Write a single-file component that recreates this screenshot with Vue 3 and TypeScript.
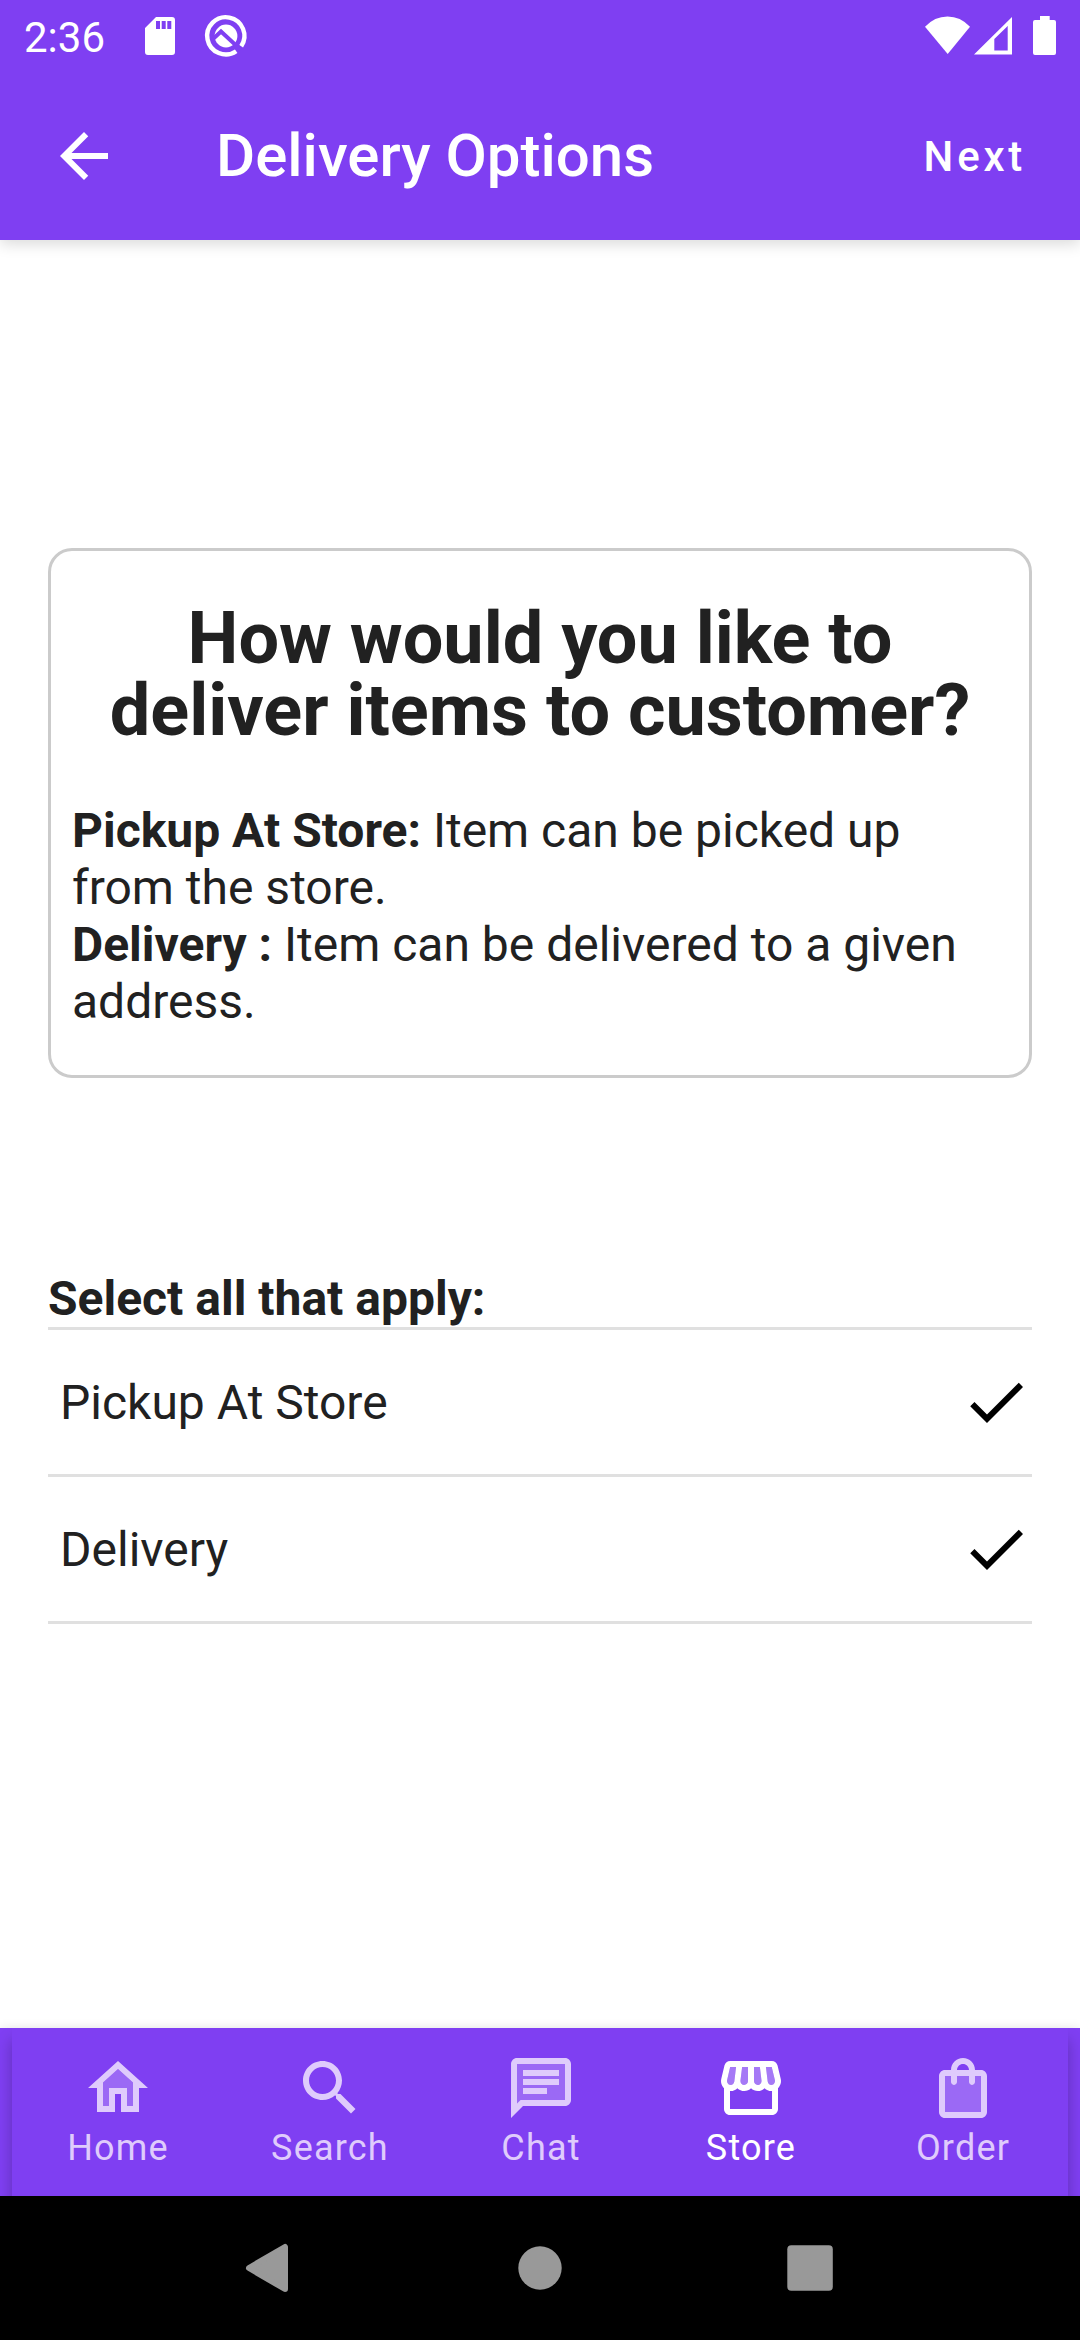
<script setup lang="ts">
interface Tab {
  label: string
  line: string
  fill?: string
  active?: boolean
}

const options: string[] = ['Pickup At Store', 'Delivery']

const tabs: Tab[] = [
  {
    label: 'Home',
    line: 'M12 3L2 12h3v8h6v-6h2v6h6v-8h3L12 3zm5 15h-2v-6H9v6H7v-7.81l5-4.5 5 4.5V18z',
    fill: 'M12 5.69l-5 4.5V18h2v-6h6v6h2v-7.81l-5-4.5z',
  },
  {
    label: 'Search',
    line: 'M15.5 14h-.79l-.28-.27C15.41 12.59 16 11.11 16 9.5 16 5.91 13.09 3 9.5 3S3 5.91 3 9.5 5.91 16 9.5 16c1.61 0 3.09-.59 4.23-1.57l.27.28v.79l5 4.99L20.49 19l-4.99-5zm-6 0C7.01 14 5 11.99 5 9.5S7.01 5 9.5 5 14 7.01 14 9.5 11.99 14 9.5 14z',
  },
  {
    label: 'Chat',
    line: 'M20 2H4c-1.1 0-1.99.9-1.99 2L2 22l4-4h14c1.1 0 2-.9 2-2V4c0-1.1-.9-2-2-2zm0 14H5.17L4 17.17V4h16v12zM6 12h8v2H6zm0-3h12v2H6zm0-3h12v2H6z',
    fill: 'M4 17.17L5.17 16H20V4H4v13.17zM6 6h12v2H6V6zm0 3h12v2H6V9zm0 3h8v2H6v-2z',
  },
  {
    label: 'Store',
    active: true,
    line: 'M21.9 8.89l-1.05-4.37c-.22-.9-1-1.52-1.91-1.52H5.05c-.9 0-1.69.63-1.9 1.52L2.1 8.89c-.24 1.02-.02 2.06.62 2.88.08.11.19.19.28.29V19c0 1.1.9 2 2 2h14c1.1 0 2-.9 2-2v-6.94c.09-.09.2-.18.28-.28.64-.82.87-1.87.62-2.89zm-2.99-3.9l1.05 4.37c.1.42.01.84-.25 1.17-.14.18-.44.47-.94.47-.61 0-1.14-.49-1.21-1.14L16.98 5l1.93-.01zM13 5h1.96l.54 4.52c.05.39-.07.78-.33 1.07-.22.26-.54.41-.95.41-.67 0-1.22-.59-1.22-1.31V5zM8.49 9.52L9.04 5H11v4.69c0 .72-.55 1.31-1.29 1.31-.34 0-.65-.15-.89-.41-.25-.29-.37-.68-.33-1.07zm-4.45-.16L5.05 5h1.97l-.58 4.86c-.08.65-.6 1.14-1.21 1.14-.49 0-.8-.29-.93-.47-.27-.32-.36-.75-.26-1.17zM5 19v-6.03c.08.01.15.03.23.03.87 0 1.66-.36 2.24-.95.6.6 1.4.95 2.31.95.87 0 1.65-.36 2.23-.93.59.57 1.39.93 2.29.93.84 0 1.64-.35 2.24-.95.58.59 1.37.95 2.24.95.08 0 .15-.02.23-.03V19H5z',
    fill: 'M18.91 4.99l1.05 4.37c.1.42.01.84-.25 1.17-.14.18-.44.47-.94.47-.61 0-1.14-.49-1.21-1.14L16.98 5l1.93-.01zM13 5h1.96l.54 4.52c.05.39-.07.78-.33 1.07-.22.26-.54.41-.95.41-.67 0-1.22-.59-1.22-1.31V5zM8.49 9.52L9.04 5H11v4.69c0 .72-.55 1.31-1.29 1.31-.34 0-.65-.15-.89-.41-.25-.29-.37-.68-.33-1.07zm-4.45-.16L5.05 5h1.97l-.58 4.86c-.08.65-.6 1.14-1.21 1.14-.49 0-.8-.29-.93-.47-.27-.32-.36-.75-.26-1.17z',
  },
  {
    label: 'Order',
    line: 'M18 6h-2c0-2.21-1.79-4-4-4S8 3.79 8 6H6c-1.1 0-2 .9-2 2v12c0 1.1.9 2 2 2h12c1.1 0 2-.9 2-2V8c0-1.1-.9-2-2-2zm-6-2c1.1 0 2 .9 2 2h-4c0-1.1.9-2 2-2zm6 16H6V8h2v2c0 .55.45 1 1 1s1-.45 1-1V8h4v2c0 .55.45 1 1 1s1-.45 1-1V8h2v12z',
    fill: 'M16 10c0 .55-.45 1-1 1s-1-.45-1-1V8h-4v2c0 .55-.45 1-1 1s-1-.45-1-1V8H6v12h12V8h-2v2z',
  },
]
</script>

<template>
  <div class="screen">
    <header class="top">
      <div class="status">
        <span class="clock">2:36</span>
        <svg class="notifications" width="110" height="72" viewBox="140 0 110 72" fill="#fff">
          <path
            fill-rule="evenodd"
            d="M156 17h16a3 3 0 0 1 3 3v32a3 3 0 0 1-3 3h-24a3 3 0 0 1-3-3V28zM156 21v8h4v-8zM161.7 21v8h4v-8zM167.3 21v8h4v-8z"
          />
          <path
            d="M236.2 51.2A18.6 18.6 0 1 1 241.2 46.2"
            fill="none"
            stroke="#fff"
            stroke-width="4.4"
          />
          <circle cx="226" cy="36" r="11.4" />
          <path d="M213.5 38.5L221 31.5L241 50" fill="none" stroke="#7f3ff2" stroke-width="4" />
        </svg>
        <svg class="radios" width="140" height="72" viewBox="920 0 140 72" fill="#fff">
          <path d="M947.7 54L925 26.7Q934.5 16.4 947.5 16.4T970 26.7z" />
          <path fill-rule="evenodd" d="M974 54.5L1012 17v37.5zM994.3 39v11.5h13.4V26z" />
          <path d="M1040 16h9.7v4h4.3a2 2 0 0 1 2 2v31a2 2 0 0 1-2 2h-19a2 2 0 0 1-2-2V22a2 2 0 0 1 2-2h5z" />
        </svg>
      </div>
      <div class="toolbar">
        <svg class="back" width="72" height="72" viewBox="0 0 24 24" fill="#fff">
          <path d="M20 11H7.83l5.59-5.59L12 4l-8 8 8 8 1.41-1.41L7.83 13H20v-2z" />
        </svg>
        <h1 class="title">Delivery Options</h1>
        <span class="next">Next</span>
      </div>
    </header>

    <main class="content">
      <section class="card">
        <h2>How would you like to deliver items to customer?</h2>
        <p><b>Pickup At Store:</b> Item can be picked up from the store.</p>
        <p><b>Delivery :</b> Item can be delivered to a given address.</p>
      </section>

      <h3 class="prompt">Select all that apply:</h3>
      <ul class="options">
        <li v-for="option in options" :key="option">
          <span>{{ option }}</span>
          <svg width="72" height="72" viewBox="0 0 24 24">
            <path d="M9 16.17L4.83 12l-1.42 1.41L9 19 21 7l-1.41-1.41z" />
          </svg>
        </li>
      </ul>
    </main>

    <footer class="tabs-wrap">
      <nav class="tabs">
        <div v-for="tab in tabs" :key="tab.label" class="tab" :class="{ active: tab.active }">
          <svg width="72" height="72" viewBox="0 0 24 24" fill="currentColor">
            <path v-if="tab.fill" :d="tab.fill" opacity=".3" />
            <path :d="tab.line" />
          </svg>
          <span>{{ tab.label }}</span>
        </div>
      </nav>
    </footer>

    <div class="system">
      <svg width="1080" height="144" viewBox="0 0 1080 144" fill="#999">
        <path
          d="M249 72L285 51v42z"
          stroke="#999"
          stroke-width="6"
          stroke-linejoin="round"
        />
        <circle cx="540" cy="72" r="21.7" />
        <rect x="787.3" y="49.3" width="45.5" height="45.5" rx="4" />
      </svg>
    </div>
  </div>
</template>

<style>
body {
  margin: 0;
  background: #fff;
}
</style>

<style scoped>
.screen {
  display: flex;
  flex-direction: column;
  width: 1080px;
  height: 2340px;
  overflow: hidden;
  background: #fff;
  color: #212121;
  font-family: Roboto, sans-serif;
}
h1,
h2,
h3,
p,
ul {
  margin: 0;
  padding: 0;
}
svg {
  display: block;
  flex: none;
}
.top {
  flex: none;
  height: 240px;
  background: #7f3ff2;
  color: #fff;
  box-shadow: 0 4px 14px rgba(0, 0, 0, 0.15);
}
.status {
  display: flex;
  height: 72px;
  box-sizing: border-box;
  padding: 0 20px 0 24px;
}
.clock {
  width: 116px;
  font-size: 42px;
  line-height: 76px;
}
.radios {
  margin-left: auto;
}
.toolbar {
  display: flex;
  align-items: center;
  height: 168px;
  padding: 0 54px 0 48px;
}
.title {
  margin-left: 96px;
  font-size: 60px;
  font-weight: 500;
  line-height: 72px;
}
.next {
  margin-left: auto;
  padding-top: 2px;
  font-size: 42px;
  font-weight: 500;
  line-height: 50px;
  letter-spacing: 3.75px;
}
.content {
  flex: 1;
  padding: 308px 48px 0;
}
.card {
  box-sizing: border-box;
  height: 530px;
  padding: 52px 21px 0;
  border: 3px solid #cbcbcb;
  border-radius: 24px;
}
.card h2 {
  margin-bottom: 55px;
  font-size: 72px;
  font-weight: 700;
  line-height: 72px;
  text-align: center;
}
.card p {
  font-size: 48px;
  line-height: 57px;
}
.prompt {
  margin-top: 192px;
  font-size: 48px;
  font-weight: 700;
  line-height: 57px;
}
.options {
  list-style: none;
  border-top: 3px solid #e0e0e0;
}
.options li {
  display: flex;
  align-items: center;
  justify-content: space-between;
  height: 144px;
  padding-left: 12px;
  border-bottom: 3px solid #e0e0e0;
  font-size: 48px;
}
.tabs-wrap {
  flex: none;
  height: 168px;
  padding: 0 12px;
  background: #7f3ff2;
  box-shadow: 0 0 10px rgba(0, 0, 0, 0.1);
}
.tabs {
  display: grid;
  grid-template-columns: 212px 212px 210px 210px 214px;
  height: 168px;
  background: #7f3ff2;
  box-shadow: 0 12px 14px rgba(0, 0, 0, 0.25);
}
.tab {
  display: flex;
  flex-direction: column;
  align-items: center;
  padding-top: 24px;
  color: #dfcbfc;
  font-size: 36px;
  line-height: 42px;
  letter-spacing: 1.2px;
}
.tab.active {
  color: #fff;
}
.tab span {
  margin-top: 3px;
}
.system {
  flex: none;
  height: 144px;
  background: #000;
}
</style>
